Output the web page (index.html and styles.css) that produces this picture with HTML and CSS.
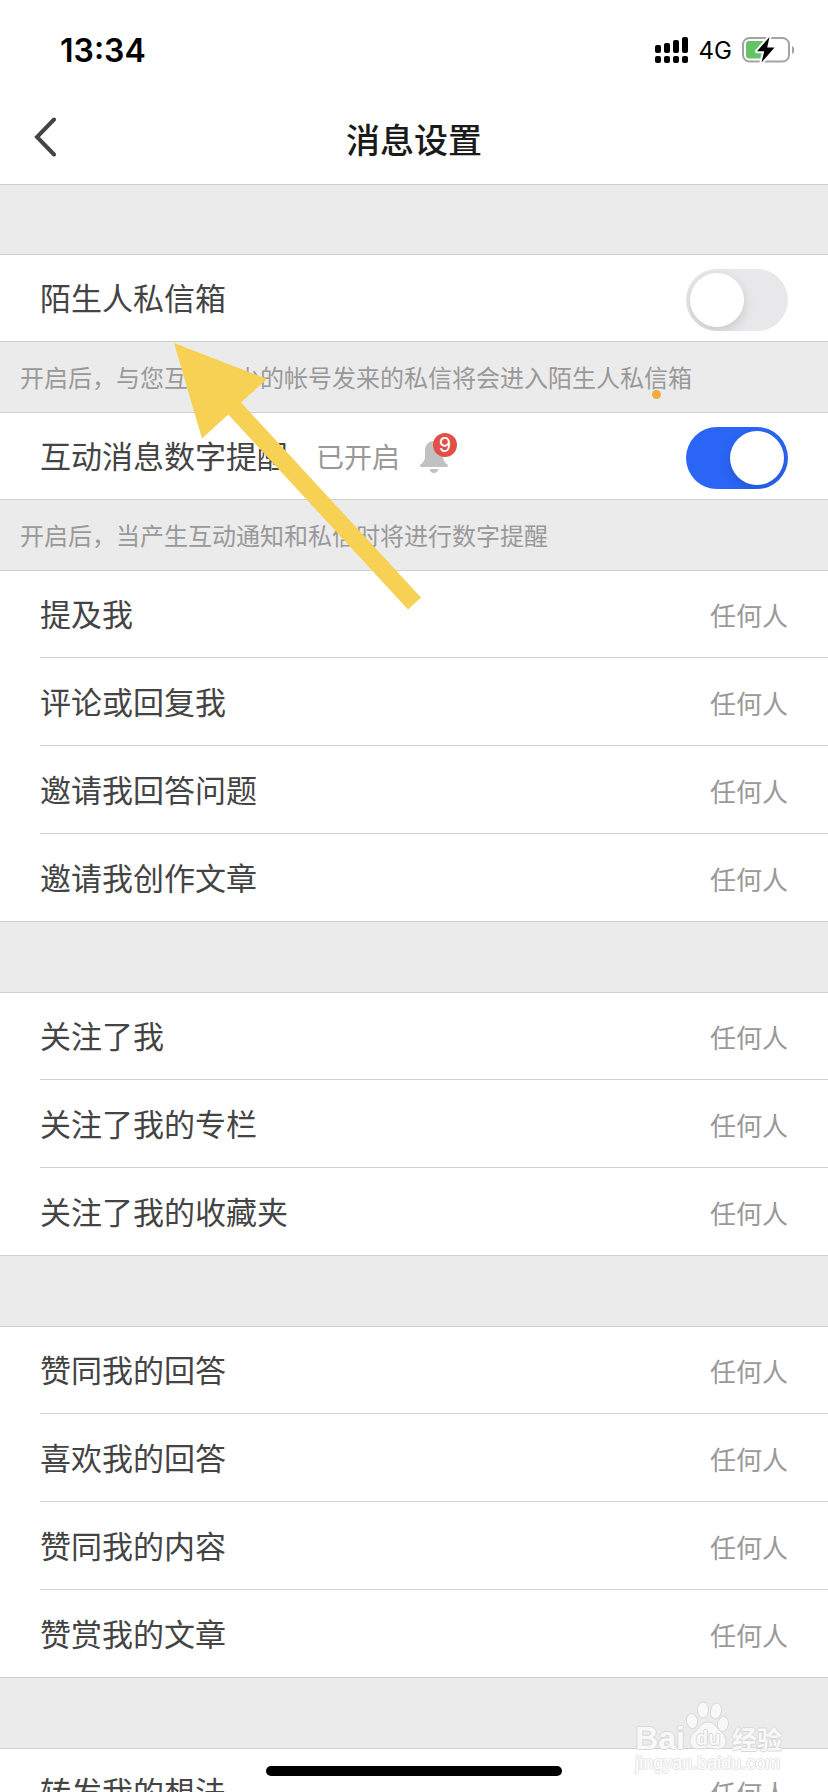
FILE: index.html
```html
<!DOCTYPE html>
<html lang="zh-CN">
<head>
<meta charset="utf-8">
<meta name="viewport" content="width=device-width">
<title>消息设置</title>
<link rel="stylesheet" href="styles.css">
</head>
<body>
<div class="screen">
  <div class="status">
    <span class="status-time">13:34</span>
    <div class="status-icons">
      <svg class="signal" width="34" height="26" viewBox="0 0 34 26" aria-hidden="true">
        <rect x="0" y="8" width="6" height="8" rx="2"/><rect x="9" y="6" width="6" height="10" rx="2"/>
        <rect x="18" y="3" width="6" height="13" rx="2"/><rect x="27" y="0" width="6" height="16" rx="2"/>
        <rect x="0" y="19" width="6" height="7" rx="2"/><rect x="9" y="19" width="6" height="7" rx="2"/>
        <rect x="18" y="19" width="6" height="7" rx="2"/><rect x="27" y="19" width="6" height="7" rx="2"/>
      </svg>
      <span class="network">4G</span>
      <svg class="battery" width="54" height="28" viewBox="0 0 54 28" aria-hidden="true">
        <rect x="1" y="2" width="46" height="23.500" rx="6.500" fill="none" stroke="#a3a3a3" stroke-width="2"/>
        <path d="M50 10c3 .8 3 7 0 8z" fill="#a3a3a3"/>
        <path d="M7 5h17v17.500H7a3 3 0 0 1-3-3V8a3 3 0 0 1 3-3z" fill="#63c466"/>
        <path d="M27.500 1 15 15.200h7.200L19.500 26.500 32.500 11.500h-7.300z" fill="#000" stroke="#fff" stroke-width="4" stroke-linejoin="round"/>
        <path d="M27.500 1 15 15.200h7.200L19.500 26.500 32.500 11.500h-7.300z" fill="#000"/>
      </svg>
    </div>
  </div>

  <header class="nav">
    <button class="back" type="button" aria-label="返回">
      <svg width="24" height="40" viewBox="0 0 24 40" fill="none" stroke="#444" stroke-width="4" stroke-linecap="round" stroke-linejoin="miter" aria-hidden="true"><path d="M20 2.500 3 20l17 17.500"/></svg>
    </button>
    <h1 class="title">消息设置</h1>
  </header>

  <main>
    <div class="band band-top"></div>
    <div class="row row-first switch-row">
      <label class="label" for="stranger">陌生人私信箱</label>
      <input class="switch" id="stranger" type="checkbox" role="switch">
    </div>
    <p class="band hint">开启后，与您互动较少的帐号发来的私信将会进入陌生人私信箱</p>
    <div class="row row-first switch-row">
      <label class="label" for="badge">互动消息数字提醒</label>
      <span class="state">已开启</span>
      <span class="bell">
        <svg width="28" height="32" viewBox="0 0 28 32" fill="#c1c1c1" aria-hidden="true">
          <path d="M14 0C8 0 5 4.500 5 10v5c0 4-1.400 6.200-4.200 8.200-1.400 1-.9 2.800.9 2.800h24.600c1.800 0 2.300-1.800.9-2.800C24.400 21.200 23 19 23 15v-5c0-5.500-3-10-9-10z"/>
          <path d="M9.500 28h9c-.6 2.600-2.300 4-4.500 4s-3.900-1.400-4.500-4z"/>
        </svg>
        <span class="count">9</span>
      </span>
      <input class="switch" id="badge" type="checkbox" role="switch" checked>
    </div>
    <p class="band hint">开启后，当产生互动通知和私信时将进行数字提醒</p>

    <div class="group">
      <button class="row row-first" type="button"><span class="label">提及我</span><span class="value">任何人</span></button>
      <button class="row" type="button"><span class="label">评论或回复我</span><span class="value">任何人</span></button>
      <button class="row" type="button"><span class="label">邀请我回答问题</span><span class="value">任何人</span></button>
      <button class="row" type="button"><span class="label">邀请我创作文章</span><span class="value">任何人</span></button>
    </div>
    <div class="band"></div>
    <div class="group">
      <button class="row row-first" type="button"><span class="label">关注了我</span><span class="value">任何人</span></button>
      <button class="row" type="button"><span class="label">关注了我的专栏</span><span class="value">任何人</span></button>
      <button class="row" type="button"><span class="label">关注了我的收藏夹</span><span class="value">任何人</span></button>
    </div>
    <div class="band"></div>
    <div class="group">
      <button class="row row-first" type="button"><span class="label">赞同我的回答</span><span class="value">任何人</span></button>
      <button class="row" type="button"><span class="label">喜欢我的回答</span><span class="value">任何人</span></button>
      <button class="row" type="button"><span class="label">赞同我的内容</span><span class="value">任何人</span></button>
      <button class="row" type="button"><span class="label">赞赏我的文章</span><span class="value">任何人</span></button>
    </div>
    <div class="band"></div>
    <div class="group">
      <button class="row row-first" type="button"><span class="label">转发我的想法</span><span class="value">任何人</span></button>
    </div>
  </main>

  <svg class="arrow" width="248" height="268" viewBox="0 0 248 268" aria-hidden="true">
    <path d="M0 0 93 36 67 59.500 247 254.500 234 266.500 54.300 71.500 28 95.500z" fill="#f7d154"/>
  </svg>
  <span class="dot"></span>

  <div class="watermark">
    <div class="brand">
      <span class="brand-latin">Bai</span>
      <span class="paw">
        <svg width="45" height="50" viewBox="0 0 45 50" fill="#f8f8f8" stroke="#d9d9d9" aria-hidden="true">
          <ellipse cx="7" cy="20" rx="5.500" ry="7.500" transform="rotate(-8 7 20)"/>
          <ellipse cx="18" cy="9" rx="5.500" ry="8"/>
          <ellipse cx="31" cy="10" rx="5.500" ry="8" transform="rotate(10 31 10)"/>
          <ellipse cx="38" cy="23" rx="5.500" ry="7.500" transform="rotate(10 38 23)"/>
          <path d="M23 21c-6 0-8 5-12 9-4 3-6 6-6 10 0 5 3 8 8 8 4 0 6-1 10-1s6 1 10 1c5 0 8-3 8-8 0-4-2-7-6-10-4-4-6-9-12-9z"/>
        </svg>
        <span class="paw-text">du</span>
      </span>
      <span class="brand-cjk">经验</span>
    </div>
    <span class="site">jingyan.baidu.com</span>
  </div>
  <div class="home"></div>
</div>
</body>
</html>
```

FILE: styles.css
```css
* { box-sizing: border-box; }

body {
  margin: 0;
  background: #fff;
  color: #444;
  font-family: "Noto Sans CJK SC", sans-serif;
}

button {
  margin: 0;
  border: 0;
  background: none;
  color: inherit;
  font: inherit;
}

.screen {
  position: relative;
  height: 100vh;
  overflow: hidden;
}

.status {
  display: flex;
  align-items: center;
  justify-content: space-between;
  height: 100px;
  padding: 0 32px 0 60px;
  color: #000;
  font-family: Inter, sans-serif;
}
.status-time { font-size: 32px; font-weight: 600; }
.status-icons { display: flex; align-items: center; gap: 10px; }
.network { font-size: 24px; }

.nav {
  display: grid;
  grid-template-columns: 88px 1fr 88px;
  align-items: center;
  height: 85px;
  padding-bottom: 6px;
  border-bottom: 1px solid #d0d0d0;
}
.back { display: flex; padding: 0 0 4px 34px; }
.title {
  margin: 0;
  color: #1a1a1a;
  font-size: 34px;
  font-weight: 500;
  line-height: 48px;
  text-align: center;
}

.band {
  height: 71px;
  margin: 0;
  border-bottom: 1px solid #d0d0d0;
  background: #ebebeb;
}
.band-top { height: 70px; }
.hint {
  padding-left: 20px;
  color: #999;
  font-size: 24px;
  line-height: 70px;
  white-space: nowrap;
}

.row {
  display: flex;
  align-items: baseline;
  width: 100%;
  height: 88px;
  padding: 0 40px;
  line-height: 86px;
  text-align: left;
}
.row-first { height: 87px; line-height: 84px; }
.label { font-size: 31px; }
.value { margin-left: auto; font-size: 26px; }
.value, .state { color: #999; }
.state { margin-left: 28px; font-size: 28px; }

.group .row {
  padding: 0 40px 0 0;
  border-bottom: 1px solid #d0d0d0;
}
.group { padding-left: 40px; background: #fff; }
.group .row:last-child { border-bottom-color: transparent; }
.group, .switch-row { box-shadow: inset 0 -1px #d0d0d0; }

.switch {
  flex: none;
  align-self: flex-start;
  width: 102px;
  height: 62px;
  margin: 14px 0 0 auto;
  padding: 4px;
  border-radius: 31px;
  background: #e8e8ea;
  overflow: hidden;
  appearance: none;
}
.switch::before {
  content: "";
  display: block;
  width: 54px;
  height: 54px;
  border-radius: 50%;
  background: #fff;
  box-shadow: 0 4px 12px rgba(0, 0, 0, .14);
}
.switch:checked { background: #2a65f6; }
.switch:checked::before { margin-left: auto; }

.bell {
  position: relative;
  align-self: flex-start;
  margin: 28px 0 0 20px;
  line-height: 0;
}
.count {
  position: absolute;
  top: -8px;
  left: 13px;
  width: 24px;
  height: 24px;
  border-radius: 50%;
  background: #e05048;
  color: #fff;
  font-family: Inter, sans-serif;
  font-size: 20px;
  line-height: 24px;
  text-align: center;
}

.arrow { position: absolute; top: 343px; left: 174px; }
.dot {
  position: absolute;
  top: 390px;
  left: 652px;
  width: 9px;
  height: 9px;
  border-radius: 50%;
  background: #f2ac3c;
}

.watermark {
  position: absolute;
  right: 46px;
  bottom: 16px;
  color: #f8f8f8;
  text-shadow: 1px 0 #d9d9d9, -1px 0 #d9d9d9, 0 1px #d9d9d9, 0 -1px #d9d9d9;
}
.brand {
  display: flex;
  align-items: flex-end;
  font-weight: 700;
  line-height: 26px;
}
.brand-latin { font-family: "Liberation Sans", sans-serif; font-size: 32px; }
.paw { position: relative; height: 50px; }
.paw-text {
  position: absolute;
  bottom: 0;
  left: 11px;
  font-family: "Liberation Sans", sans-serif;
  font-size: 20px;
}
.brand-cjk { margin-left: 2px; font-size: 25px; }
.site {
  display: block;
  color: #fff;
  font-family: "Liberation Sans", sans-serif;
  font-size: 18px;
  line-height: 25px;
  text-shadow: 1px 0 #e4e4e4, -1px 0 #e4e4e4, 0 1px #e4e4e4, 0 -1px #e4e4e4;
}

.home {
  position: absolute;
  bottom: 16px;
  left: 50%;
  width: 296px;
  height: 10px;
  margin-left: -148px;
  border-radius: 5px;
  background: #000;
}
```
